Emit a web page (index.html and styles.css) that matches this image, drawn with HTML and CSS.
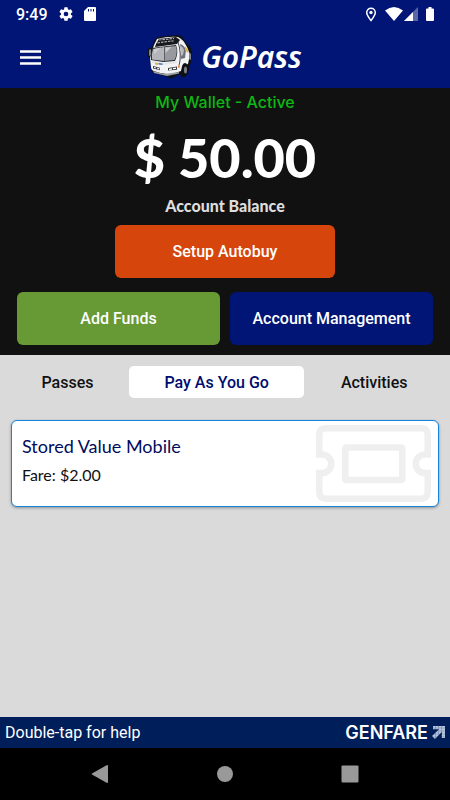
FILE: index.html
```html
<!DOCTYPE html>
<html lang="en">
<head>
  <meta charset="UTF-8">
  <meta name="viewport" content="width=device-width, initial-scale=1">

  <title>GoPass</title>

  <link rel="stylesheet" href="styles.css">
</head>

<body>
<header class="top">
  <div class="status-bar">
    <span class="clock">9:49</span>
    <svg class="gear" viewBox="0 0 24 24" width="16" height="16" fill="#fff">
      <path d="M19.4 13a7.500 7.500 0 0 0 0-2l2.100-1.650a.5.5 0 0 0 .12-.64l-2-3.460a.5.5 0 0 0-.61-.22l-2.490 1a7.300 7.300 0 0 0-1.690-.98l-.38-2.650A.5.5 0 0 0 14 2h-4a.5.5 0 0 0-.49.42l-.38 2.650c-.61.25-1.170.59-1.690.98l-2.490-1a.5.5 0 0 0-.61.22l-2 3.460a.5.5 0 0 0 .12.64L4.570 11a8 8 0 0 0 0 2l-2.110 1.650a.5.5 0 0 0-.12.64l2 3.460c.12.22.39.3.61.22l2.490-1c.52.4 1.080.73 1.690.98l.38 2.650c.03.24.24.42.49.42h4c.25 0 .46-.18.49-.42l.38-2.650c.61-.25 1.170-.59 1.690-.98l2.490 1c.23.09.49 0 .61-.22l2-3.460a.5.5 0 0 0-.12-.64zM12 15.500a3.500 3.500 0 1 1 0-7 3.500 3.500 0 0 1 0 7z"/>
    </svg>
    <svg class="sd-card" viewBox="0 0 12 14" width="12" height="14">
      <path fill="#fff" d="M4 0h7q1 0 1 1v12q0 1-1 1H1q-1 0-1-1V4z"/>
      <path stroke="#001575" d="M4.500 2v2.500M7 2v2.500M9.500 2v2.500"/>
    </svg>
    <svg class="pin" viewBox="0 0 12 15" width="12" height="15">
      <path fill="none" stroke="#fff" stroke-width="1.500" d="M6 13.500C3.500 10.400 1.700 8 1.700 5.500a4.300 4.300 0 0 1 8.600 0C10.300 8 8.500 10.400 6 13.500z"/>
      <circle cx="6" cy="5.500" r="1.700" fill="#fff"/>
    </svg>
    <svg class="wifi" viewBox="0 0 18 14" width="18" height="14">
      <path fill="#fff" d="M0 3.500Q9-3.500 18 3.500L9 14z"/>
    </svg>
    <svg class="signal" viewBox="0 0 14 14" width="14" height="14">
      <path fill="#5a68a8" d="M14 0v14H0z"/>
      <path fill="#fff" d="M9 5v9H0z"/>
    </svg>
    <svg class="battery" viewBox="0 0 8 14" width="8" height="14">
      <path fill="#fff" d="M2.500 0h3v1.500H7q1 0 1 1V13q0 1-1 1H1q-1 0-1-1V2.500q0-1 1-1h1.500z"/>
    </svg>
  </div>

  <div class="app-bar">
    <button class="menu" type="button" aria-label="Menu">
      <svg viewBox="0 0 21 15" width="21" height="15">
        <path stroke="#fff" stroke-width="2.400" d="M0 1.500h21M0 7.500h21M0 13.500h21"/>
      </svg>
    </button>
    <div class="brand">
      <svg class="bus" viewBox="3 3 44 44" width="44" height="44">
        <!-- body -->
        <path fill="#101116" d="M10 7Q12 5 17 4.500L32 3q4 0 6 3l4 6q4 2 5 8 0 9-3 16-1 7-5 9-3 1-4-3l-6 3q-3 3-6 0L9 41q-3-1-3-4L5 27l-2-3v-7l4-2z"/>
        <path fill="#f3f3f5" d="M9 13l3-6q12-3 21-2 5 2 9 10 4 7 1 17-6 2-7 7l-9 3q-9 1-18-3-3-1-3-4l-1-9z"/>
        <!-- roof grille -->
        <path fill="#17181d" d="M11 12l3-5 17-2 4 3-3 4-22 3z"/>
        <path stroke="#a9abb3" stroke-width="1.200" stroke-dasharray="2.500 1" d="M14 8l15-1.500M12.500 10.800l16-2"/>
        <!-- windshield -->
        <path fill="#26272d" d="M7 16l15-2 9-1q3 7-1 16l-12 1-12-2q-1-6 1-12z"/>
        <path fill="#b4b5ba" d="M8 17l11-2v14L7 27.500q-1-5 1-10.500z"/>
        <path fill="#97999f" d="M19.500 15L31 14q2 7-1.500 14l-10 1z"/>
        <path fill="#cbccd0" d="M9 17l7-1.500L9 22zM20.500 15.500l6-.5-6 6z"/>
        <!-- side window and door -->
        <path fill="#6d7078" d="M35 12q4 1 6 6l-1 8-4 1q1-8-1-15z"/>
        <path fill="#b9bbc1" d="M36 14q2 1 3 4l-1 5-2 1z"/>
        <path fill="none" stroke="#45464d" d="M33 10q4 12 1 24"/>
        <path fill="#e4b640" d="M40 14l3 4v3l-3-3z"/>
        <!-- front panel -->
        <path fill="#e4e5e8" d="M7 29l12 2 13-2v2l-14 2-11-2z"/>
        <path fill="#e1b62e" d="M10 30.500l3 .5v2l-3-.5z"/>
        <path fill="#5275a8" d="M13.500 31l4 .5v1.500l-4-.5z"/>
        <path fill="#3b3c42" d="M8 34l7 1.700v2.500L8 36.500zM23 36l9-1.500v3.300l-9 .8z"/>
        <path fill="#fff" d="M9 34.900l2 .5v1.200l-2-.5zM12.300 35.700l2 .5v1.200l-2-.5zM24 36.700l3-.5v1.500l-3 .3zM28 36l3-.5v1.500l-3 .3z"/>
        <path fill="#ee925f" d="M33 33l2-.5v3l-2 .5z"/>
        <path fill="#9fa1a7" d="M8 39l11 3 15-2v1.500L22 44 9 41z"/>
        <!-- wheel and mirrors -->
        <ellipse cx="40" cy="37.500" rx="3.500" ry="6.500" fill="#0e0f13"/>
        <ellipse cx="40.500" cy="38" rx="1.500" ry="3.500" fill="#7e8087"/>
        <path fill="#808289" d="M4 18l2-1v6l-2 1zM44 20l2 2v6l-2-1z"/>
      </svg>
      <span class="brand-name">GoPass</span>
    </div>
  </div>
</header>

<section class="wallet">
  <h1 class="wallet-title">My Wallet - Active</h1>
  <div class="balance">$ 50.00</div>
  <div class="balance-label">Account Balance</div>
  <button class="btn autobuy" type="button">Setup Autobuy</button>
  <div class="actions">
    <button class="btn funds" type="button">Add Funds</button>
    <button class="btn account" type="button">Account Management</button>
  </div>
</section>

<main class="content">
  <nav class="tabs">
    <button class="tab" type="button">Passes</button>
    <button class="tab active" type="button">Pay As You Go</button>
    <button class="tab" type="button">Activities</button>
  </nav>

  <a class="ticket" href="#">
    <div class="ticket-text">
      <h2 class="ticket-name">Stored Value Mobile</h2>
      <p class="ticket-fare">Fare: $2.00</p>
    </div>
    <svg class="ticket-icon" viewBox="0 0 116 78" width="116" height="78" fill="none" stroke="#efefef" stroke-width="6.500">
      <path d="M3.300 32V10q0-6.700 6.700-6.700h95q6.700 0 6.700 6.700v22M3.300 45v22q0 6.700 6.700 6.700h95q6.700 0 6.700-6.700V45"/>
      <path d="M0 29.500h6a9.300 9.300 0 0 1 0 18.600H0M115 29.500h-6a9.300 9.300 0 0 0 0 18.600h6"/>
      <rect x="29.300" y="22.500" width="57" height="32.500" rx="1"/>
    </svg>
  </a>
</main>

<footer class="footer">
  <span>Double-tap for help</span>
  <span class="genfare">GENFARE
    <svg viewBox="0 0 13 13" width="13" height="13">
      <path fill="#b6c5dc" d="M1 0h12v12h-3.200V6L3 13 0 10l7-6.800H1z"/>
      <path stroke="#001e5a" stroke-width=".5" opacity=".4" d="M3.500 0v13M6.500 0v13M9.500 0v13M0 2h13M0 5h13M0 8h13M0 11h13"/>
    </svg>
  </span>
</footer>

<div class="nav-bar">
  <button class="nav-btn" type="button" aria-label="Back">
    <svg viewBox="0 0 18 18" width="18" height="18" fill="#999"><path d="M16 0q1 0 1 1v16q0 1-1 1L1 9.500q-.7-.5 0-1z"/></svg>
  </button>
  <button class="nav-btn" type="button" aria-label="Home">
    <svg viewBox="0 0 18 18" width="18" height="18" fill="#999"><circle cx="9" cy="9" r="8"/></svg>
  </button>
  <button class="nav-btn" type="button" aria-label="Recent apps">
    <svg viewBox="0 0 18 18" width="18" height="18" fill="#999"><rect x=".5" y=".5" width="17" height="17" rx="1"/></svg>
  </button>
</div>
</body>
</html>
```
FILE: styles.css
```css
html, body {
  height: 100%;
}

body {
  display: flex;
  flex-direction: column;
  margin: 0;

  background: #dadada;
  font-family: Roboto, sans-serif;
}

button {
  border: 0;
  padding: 0;
  background: none;
  font-family: inherit;
  cursor: pointer;
}

svg {
  display: block;
  flex: none;
}

/* Status bar and logo */
.top {
  background: #001575;
  color: white;
}

.status-bar {
  display: flex;
  align-items: center;
  height: 28px;
  padding: 0 16px;
}

.clock {
  font-size: 16px;
  font-weight: 500;
}

.gear {
  margin-left: 10px;
}

.sd-card {
  margin-left: 10px;
}

.pin {
  margin-left: auto;
}

.wifi {
  margin-left: 8px;
}

.signal {
  margin-left: 1px;
}

.battery {
  margin-left: 8px;
}

.app-bar {
  display: grid;
  grid-template-columns: 1fr auto 1fr;
  align-items: center;
  height: 58px;
  padding: 0 20px 2px;
}

.menu {
  justify-self: start;
}

.brand {
  display: flex;
  align-items: center;
  gap: 9px;
}

.brand-name {
  font-family: "Noto Sans", sans-serif;
  font-size: 30px;
  font-style: italic;
  font-weight: 600;
  line-height: 40px;
}

/* Balance */
.wallet {
  display: flex;
  flex-direction: column;
  align-items: center;
  padding: 4px 17px 10px;

  background: #111;
  color: white;
}

.wallet-title {
  margin: 0;
  color: #0db814;
  font-family: Inter, sans-serif;
  font-size: 16px;
  font-weight: 500;
  line-height: 20px;
}

.balance {
  margin-top: 14px;
  font-family: Lato, sans-serif;
  font-size: 54px;
  font-weight: 900;
  line-height: 64px;
}

.balance-label {
  margin-top: 6px;
  color: #ddd;
  font-family: Lato, sans-serif;
  font-size: 16px;
  font-weight: 900;
  line-height: 20px;
}

.btn {
  height: 53px;
  border-radius: 6px;
  color: white;
  font-size: 16px;
  font-weight: 500;
}

.autobuy {
  width: 53%;
  margin-top: 9px;
  background: #d5450c;
}

.actions {
  display: grid;
  grid-template-columns: 1fr 1fr;
  gap: 10px;
  align-self: stretch;
  margin-top: 14px;
}

.funds {
  background: #679a34;
}

.account {
  background: #001575;
}

/* Tabs and passes */
.content {
  flex: 1;
  padding: 11px;
}

.tabs {
  display: grid;
  grid-template-columns: 27fr 42fr 31fr;
  gap: 5px;
}

.tab {
  height: 32px;
  border-radius: 5px;
  color: #111;
  font-size: 16px;
  font-weight: 500;
}

.tab.active {
  background: white;
  color: #000c70;
}

.ticket {
  display: flex;
  justify-content: space-between;
  margin-top: 22px;
  padding: 4px 6px 3px 10px;

  border: 1px solid #1584df;
  border-radius: 6px;
  background: white;
  box-shadow: 0 1px 3px rgba(0, 0, 0, 0.35);
  color: #111;
  font-family: Lato, sans-serif;
  text-decoration: none;
}

.ticket-name {
  margin: 9px 0 0;
  color: #000c5c;
  font-size: 18px;
  font-weight: 400;
  line-height: 24px;
}

.ticket-fare {
  margin: 7px 0 0;
  font-size: 16px;
  line-height: 20px;
}

/* Bottom bars */
.footer {
  display: flex;
  align-items: center;
  justify-content: space-between;
  height: 31px;
  padding: 0 5px;

  background: #001e5a;
  color: white;
  font-size: 16px;
}

.genfare {
  display: flex;
  align-items: center;
  gap: 4px;
  font-family: Inter, sans-serif;
  font-size: 18px;
  font-weight: 600;
}

.nav-bar {
  display: flex;
  align-items: center;
  justify-content: center;
  gap: 107px;
  height: 52px;
  background: black;
}
```
